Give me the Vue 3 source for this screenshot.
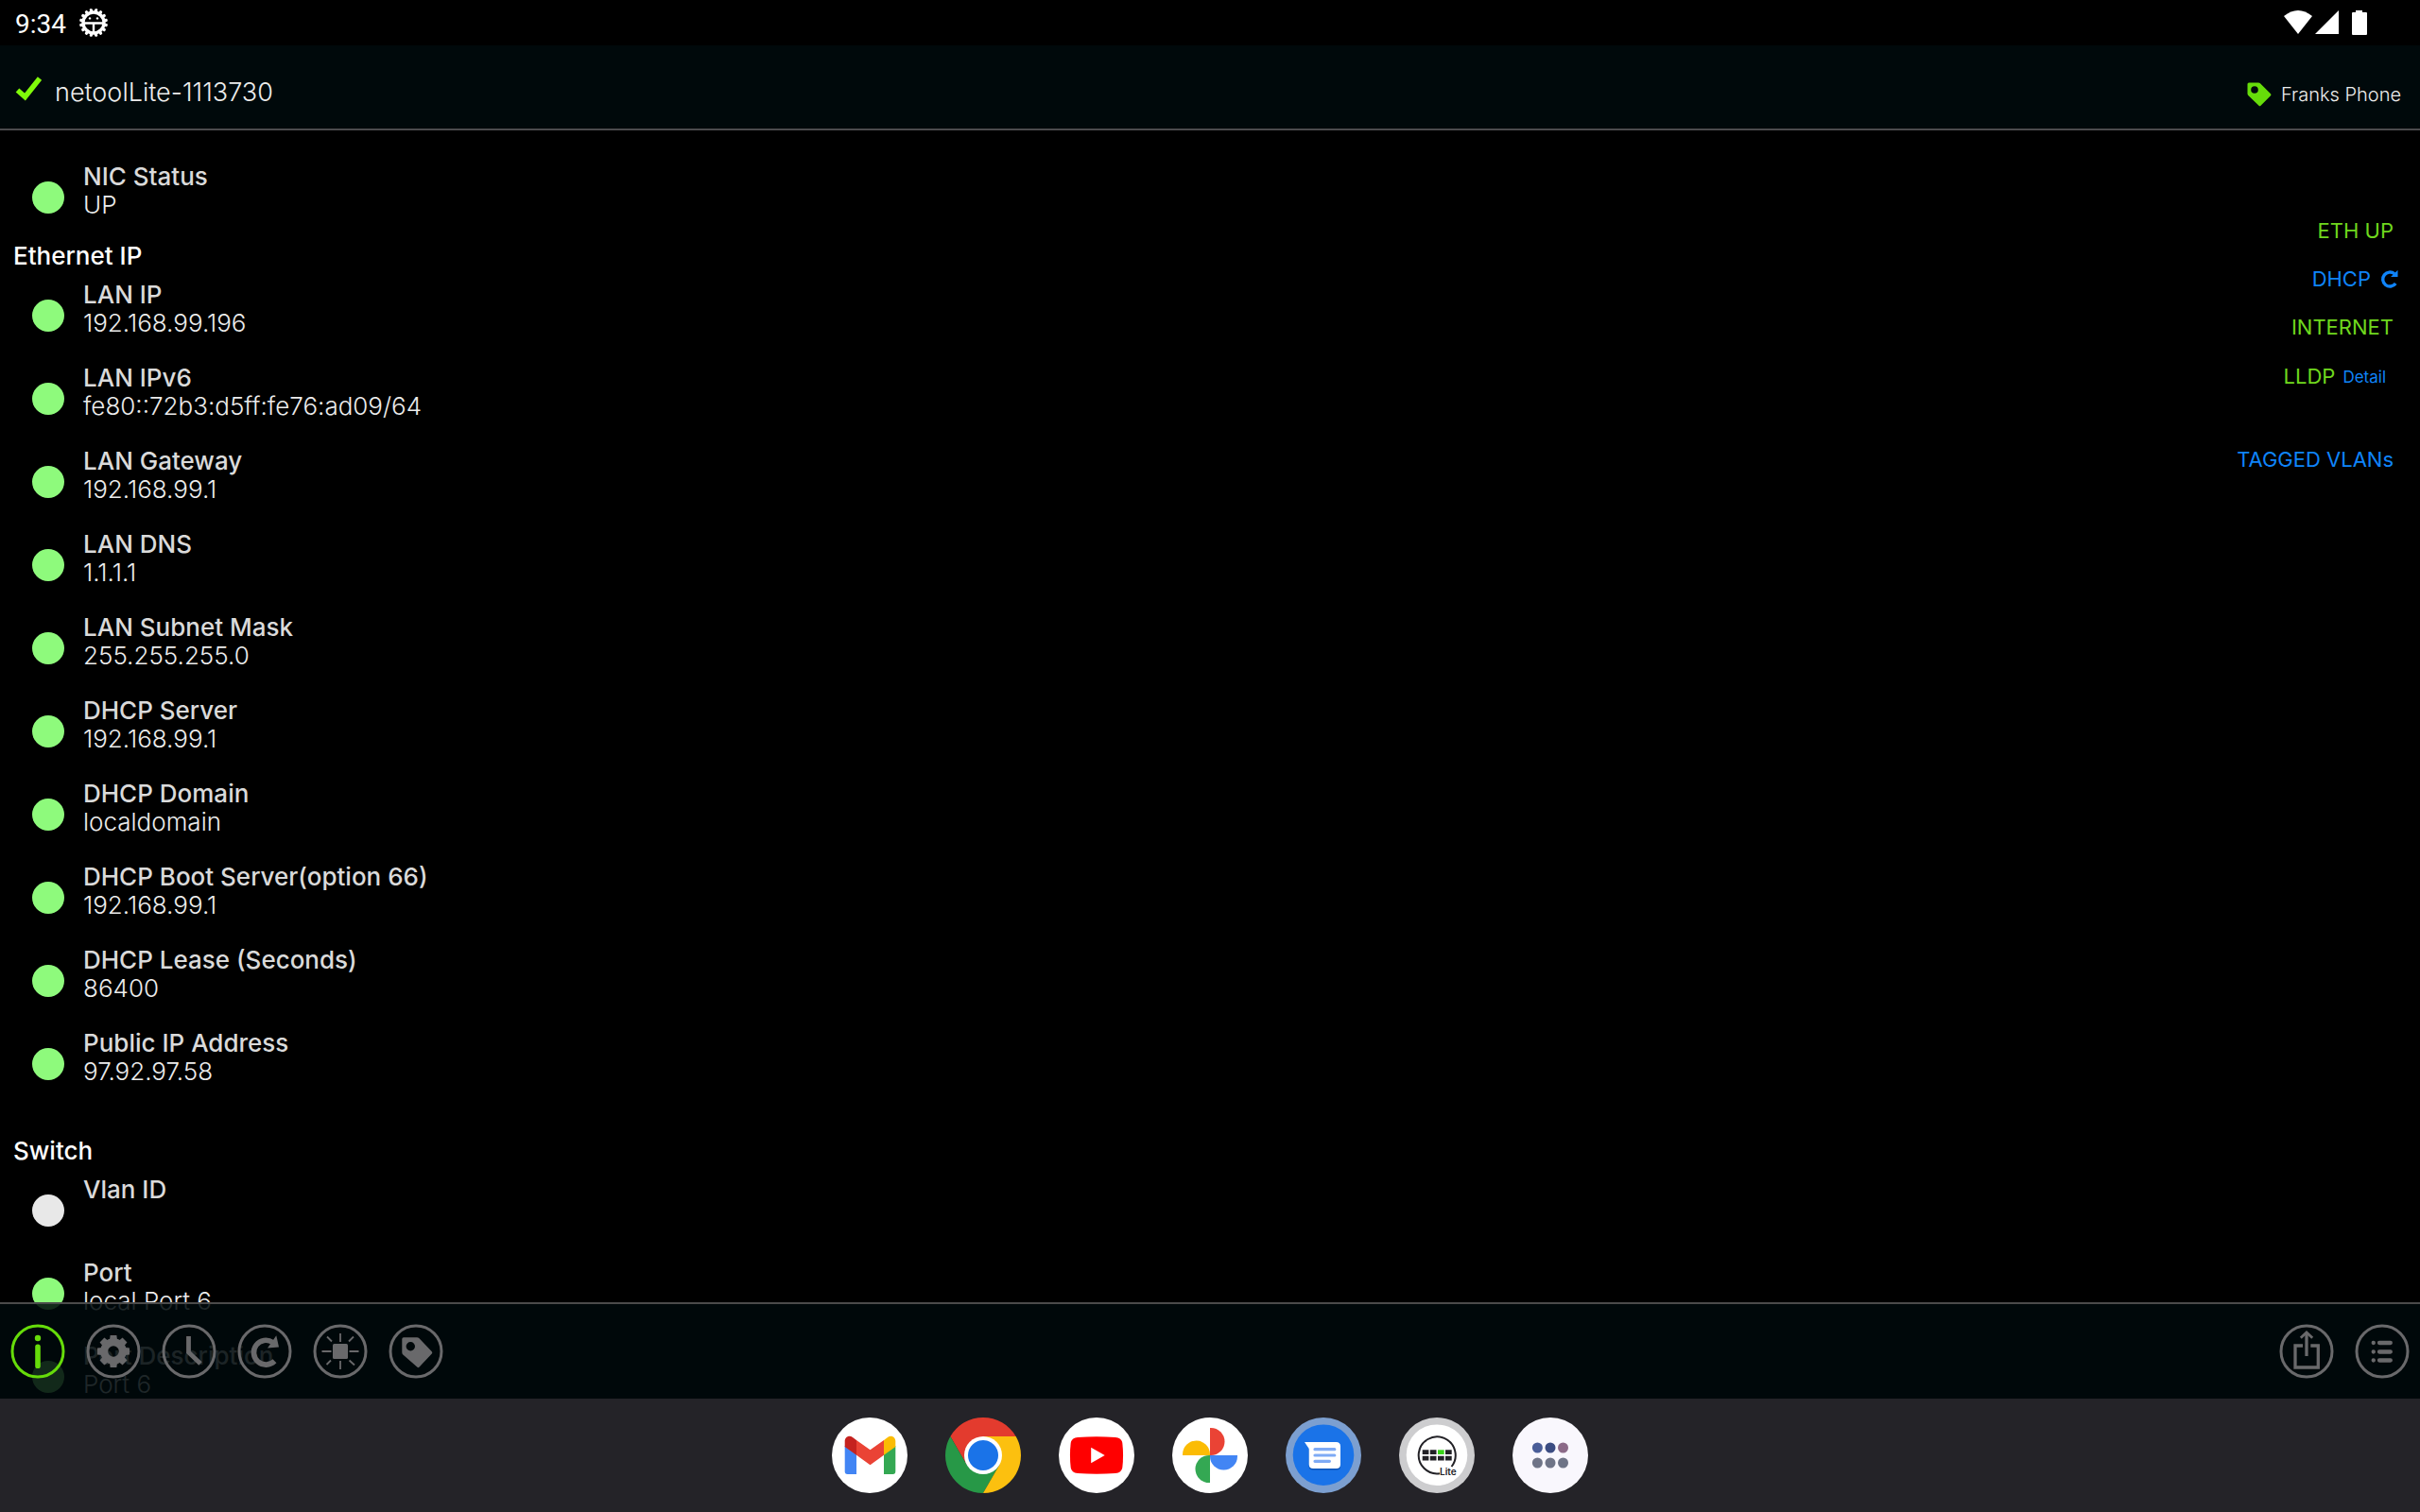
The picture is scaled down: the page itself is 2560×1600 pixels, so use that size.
<script setup>
import {ref} from 'vue'

let activeTab = ref('Info')

let groups = [
  {
    title: '',
    rows: [{label: 'NIC Status', value: 'UP', ok: true}]
  },
  {
    title: 'Ethernet IP',
    rows: [
      {label: 'LAN IP', value: '192.168.99.196', ok: true},
      {label: 'LAN IPv6', value: 'fe80::72b3:d5ff:fe76:ad09/64', ok: true},
      {label: 'LAN Gateway', value: '192.168.99.1', ok: true},
      {label: 'LAN DNS', value: '1.1.1.1', ok: true},
      {label: 'LAN Subnet Mask', value: '255.255.255.0', ok: true},
      {label: 'DHCP Server', value: '192.168.99.1', ok: true},
      {label: 'DHCP Domain', value: 'localdomain', ok: true},
      {label: 'DHCP Boot Server(option 66)', value: '192.168.99.1', ok: true},
      {label: 'DHCP Lease (Seconds)', value: '86400', ok: true},
      {label: 'Public IP Address', value: '97.92.97.58', ok: true}
    ]
  },
  {
    title: 'Switch',
    rows: [
      {label: 'Vlan ID', value: '', ok: false},
      {label: 'Port', value: 'local Port 6', ok: true},
      {label: 'Port Description', value: 'Port 6', ok: true}
    ]
  }
]

let tabs = ['Info', 'Settings', 'History', 'Refresh', 'Blink', 'Tag']
let apps = ['Gmail', 'Chrome', 'YouTube', 'Photos', 'Messages', 'netool Lite', 'All apps']
let teeth = [0, 45, 90, 135, 180, 225, 270, 315]
let bugTeeth = Array.from({length: 16}, (_, i) => i * 22.5 + 11.25)
</script>

<template>
  <div class="screen">
    <div class="status_bar">
      <span class="clock">9:34</span>
      <svg class="bug" viewBox="0 0 30 30">
        <g fill="#fff">
          <rect v-for="a in bugTeeth" :key="a" x="13.400" y="0" width="3.200" height="4" rx="1.200"
                :transform="`rotate(${a} 15 15)`"/>
        </g>
        <circle cx="15" cy="15" r="11" fill="none" stroke="#fff" stroke-width="3.400"/>
        <path d="M4 15.500H26M15 15.500V26" stroke="#fff" stroke-width="2.400"/>
        <circle cx="11" cy="10.400" r="1.200" fill="#fff"/>
        <circle cx="19" cy="10.400" r="1.200" fill="#fff"/>
      </svg>
      <svg class="signals" viewBox="0 0 90 28" fill="#fff">
        <path d="M0 7Q15-5 30 7L15 26Z"/>
        <path d="M33 26L58 1V26Z"/>
        <path d="M76 1H83V3H87Q88 3 88 4V26Q88 27 87 27H73Q72 27 72 26V4Q72 3 73 3H76Z"/>
      </svg>
    </div>

    <header class="title_bar">
      <svg class="check" viewBox="0 0 30 28">
        <path d="M2.500 15.500L10.500 22.500L26 3" fill="none" stroke="#80fa0a" stroke-width="5.500"/>
      </svg>
      <h1>netoolLite-1113730</h1>
      <svg class="phone_tag" viewBox="0 0 26 26">
        <path fill="#66dc0a" fill-rule="evenodd"
              d="M2 0.500H12Q13.200 0.500 14 1.300L25 12.200Q26 13.200 25 14.200L14.500 24.800Q13.500 25.800 12.500 24.800L1.300 14Q0.500 13.200 0.500 12V2Q0.500 0.500 2 0.500ZM8 4.200A3.800 3.800 0 1 0 8 11.800A3.800 3.800 0 1 0 8 4.200Z"/>
      </svg>
      <span class="phone">Franks Phone</span>
    </header>

    <main class="content">
      <div class="info_list">
        <section v-for="(group, g) in groups" :key="g" class="group">
          <h2 v-if="group.title">{{ group.title }}</h2>
          <div v-for="row in group.rows" :key="row.label" class="row">
            <span :class="row.ok ? 'dot' : 'dot off'"></span>
            <div class="texts">
              <div class="label">{{ row.label }}</div>
              <div class="value">{{ row.value }}</div>
            </div>
          </div>
        </section>
      </div>

      <aside class="side">
        <div class="side_line">ETH UP</div>
        <button class="side_line blue dhcp">DHCP
          <svg viewBox="0 1 20 20">
            <path d="M15 4.800A7.500 7.500 0 1 0 16.200 15" fill="none" stroke="currentColor" stroke-width="3.400"/>
            <path d="M18.500 0.800V8L11 8Z" fill="currentColor"/>
          </svg>
        </button>
        <div class="side_line">INTERNET</div>
        <div class="side_line lldp">LLDP
          <button class="blue detail">Detail</button>
        </div>
        <button class="side_line blue vlans">TAGGED VLANs</button>
      </aside>

      <nav class="toolbar">
        <button v-for="tab in tabs" :key="tab" :class="activeTab === tab ? 'tool active' : 'tool'"
                :aria-label="tab" @click="activeTab = tab">
          <svg viewBox="0 0 60 60">
            <circle cx="30" cy="30" r="27" fill="none" stroke="currentColor" stroke-width="3"/>
            <g v-if="tab === 'Info'" fill="currentColor">
              <circle cx="30" cy="16" r="3.200"/>
              <rect x="27.200" y="22.500" width="5.600" height="25.500" rx="2.600"/>
            </g>
            <g v-else-if="tab === 'Settings'">
              <circle cx="30" cy="30" r="9.800" fill="none" stroke="currentColor" stroke-width="8"/>
              <path v-for="a in teeth" :key="a" d="M26 18L26.600 13H33.400L34 18Z" fill="currentColor"
                    :transform="`rotate(${a} 30 30)`"/>
            </g>
            <path v-else-if="tab === 'History'" d="M29.500 14V31L42 43" fill="none" stroke="currentColor"
                  stroke-width="4.800"/>
            <g v-else-if="tab === 'Refresh'">
              <path d="M38.500 20.500A12.900 12.900 0 1 0 40.500 40.300" fill="none" stroke="currentColor" stroke-width="5.600"/>
              <path d="M42.300 13.300L45 25.500L33 26.500Z" fill="currentColor"/>
            </g>
            <g v-else-if="tab === 'Blink'">
              <rect x="22" y="22" width="16" height="16" rx="1.500" fill="currentColor"/>
              <path d="M30 11V20M30 40V49M10.500 30H20.500M39.500 30H49.500M16 14.500L21 19.500M39 19.500L44 14.500M15.500 44L20 39.500M39.500 39.500L45 44.500"
                    stroke="currentColor" stroke-width="1.800"/>
            </g>
            <path v-else fill="currentColor" fill-rule="evenodd"
                  d="M17 15.300H31Q32.500 15.300 33.500 16.300L46.800 30.200Q47.800 31.400 46.800 32.600L33.600 46.600Q32.400 47.800 31.200 46.600L16.300 33.500Q15.300 32.600 15.300 31V17Q15.300 15.300 17 15.300ZM24.300 20A4.700 4.700 0 1 0 24.300 29.400A4.700 4.700 0 1 0 24.300 20Z"/>
          </svg>
        </button>
        <div class="spacer"></div>
        <button class="tool" aria-label="Share">
          <svg viewBox="0 0 60 60" fill="none" stroke="currentColor" stroke-width="3">
            <circle cx="30" cy="30" r="27"/>
            <path d="M26 24H18V47H42.300V24H34.300M30 35V10.500" stroke-width="3.300"/>
            <path d="M23.800 15.800L30 10L36.200 15.800" stroke-width="2.800"/>
          </svg>
        </button>
        <button class="tool" aria-label="List">
          <svg viewBox="0 0 60 60" fill="none" stroke="currentColor" stroke-width="3">
            <circle cx="30" cy="30" r="27"/>
            <path d="M20.700 21H20.800M20.700 30.500H20.800M20.700 39.500H20.800M27 21H38.800M27 30.500H38.800M27 39.500H38.800"
                  stroke-width="4.300" stroke-linecap="round"/>
          </svg>
        </button>
      </nav>
    </main>

    <footer class="dock">
      <button v-for="app in apps" :key="app" :aria-label="app">
        <svg v-if="app === 'Gmail'" viewBox="0 0 80 80">
          <circle cx="40" cy="40" r="40" fill="#fff"/>
          <path d="M13.700 30L26 38V60H16.500Q13.700 60 13.700 57Z" fill="#4285f4"/>
          <path d="M67.300 30L55 38V60H64.500Q67.300 60 67.300 57Z" fill="#34a853"/>
          <path d="M26 24L40.500 34.300L55 24V39.700L40.500 50.300L26 39.700Z" fill="#ea4335"/>
          <path d="M26 24L22 21C18.500 18 13.700 20.500 13.700 25V31L26 39.700Z" fill="#c5221f"/>
          <path d="M55 24L59 21C62.500 18 67.300 20.500 67.300 25V31L55 39.700Z" fill="#fbbc04"/>
        </svg>
        <svg v-else-if="app === 'Chrome'" viewBox="0 0 80 80">
          <path d="M40 40V20H74.640A40 40 0 0 0 5.360 20L22.680 50Z" fill="#e33b2e"/>
          <path d="M40 40L22.680 50L5.360 20A40 40 0 0 0 40 80L57.320 50Z" fill="#279847"/>
          <path d="M40 40L57.320 50L40 80A40 40 0 0 0 74.640 20H40Z" fill="#fcc00f"/>
          <circle cx="40" cy="40" r="20" fill="#fff"/>
          <circle cx="40" cy="40" r="16" fill="#1a73e8"/>
        </svg>
        <svg v-else-if="app === 'YouTube'" viewBox="0 0 80 80">
          <circle cx="40" cy="40" r="40" fill="#fff"/>
          <path d="M20 21Q40 19.500 60 21Q66.500 21.500 67.300 27Q68.800 40 67.300 53Q66.500 58.500 60 59Q40 60.500 20 59Q13.500 58.500 12.700 53Q11.200 40 12.700 27Q13.500 21.500 20 21Z"
                fill="#f00"/>
          <path d="M34.200 31.700L48.700 40L34.200 48.300Z" fill="#fff"/>
        </svg>
        <svg v-else-if="app === 'Photos'" viewBox="0 0 80 80">
          <circle cx="40" cy="40" r="40" fill="#fff"/>
          <path d="M40 11H41A14.500 14.500 0 0 1 41 40H40Z" fill="#ea4335"/>
          <path d="M69 40V41A14.500 14.500 0 0 1 40 41V40Z" fill="#4285f4"/>
          <path d="M40 69H39A14.500 14.500 0 0 1 39 40H40Z" fill="#34a853"/>
          <path d="M11 40V39A14.500 14.500 0 0 1 40 39V40Z" fill="#fbbc04"/>
        </svg>
        <svg v-else-if="app === 'Messages'" viewBox="0 0 80 80">
          <circle cx="40" cy="40" r="40" fill="#7c9fd0"/>
          <circle cx="40" cy="39.700" r="32.300" fill="#1a73e8"/>
          <path d="M24.700 34V52Q24.700 55.500 29 55.500H54Q58 55.500 58 52Z" fill="#0d55b8"/>
          <path d="M20 26H53.500Q58 26 58 30.500V49.500Q58 54 53.500 54H29.200Q24.700 54 24.700 49.500V33Z" fill="#fff"/>
          <path d="M31 33.700H51.800M31 40H51.800M31 46.300H46.400" stroke="#7eaaf5" stroke-width="3.200" stroke-linecap="round"/>
        </svg>
        <svg v-else-if="app === 'netool Lite'" viewBox="0 0 80 80">
          <circle cx="40" cy="40" r="40" fill="#cdcdcf"/>
          <circle cx="40" cy="39.700" r="32.300" fill="#fff"/>
          <path d="M43 59.200A19.500 19.500 0 1 1 55.500 52" fill="none" stroke="#222126" stroke-width="2"/>
          <rect x="24" y="33.500" width="32.300" height="12.700" fill="#fff"/>
          <path d="M24.700 34.300H31.400V39H24.700ZM32.800 34.300H39.500V39H32.800ZM49 34.300H55.700V39H49ZM24.700 40.700H31.400V45.400H24.700ZM32.800 40.700H39.500V45.400H32.800ZM41 40.700H47.700V45.400H41ZM49 40.700H55.700V45.400H49Z"
                fill="#222126"/>
          <rect x="41" y="34.300" width="6.700" height="4.700" fill="#3ad51a"/>
          <text x="43" y="61" class="lite">Lite</text>
        </svg>
        <svg v-else viewBox="0 0 80 80">
          <circle cx="40" cy="40" r="40" fill="#f9f7fd"/>
          <circle cx="26.400" cy="32" r="5.500" fill="#4a5d98"/>
          <circle cx="40" cy="32" r="5.500" fill="#3b4c82"/>
          <circle cx="53.500" cy="32" r="5.500" fill="#8c6a88"/>
          <circle cx="26.400" cy="48" r="5.500" fill="#6f7487"/>
          <circle cx="40" cy="48" r="5.500" fill="#6f7487"/>
          <circle cx="53.500" cy="48" r="5.500" fill="#6f7487"/>
        </svg>
      </button>
    </footer>
  </div>
</template>

<style>
body {
  margin: 0;
  background: #000;
}
</style>

<style scoped>
.screen {
  display: flex;
  flex-direction: column;
  height: 100vh;
  overflow: hidden;
  background: #000;
  color: #ececec;
  font-family: Inter, sans-serif;
  font-size: 26px;
  line-height: 31px;
}

svg {
  display: block;
}

button {
  padding: 0;
  border: 0;
  background: none;
  font: inherit;
  color: inherit;
  cursor: pointer;
}

h1, h2 {
  margin: 0;
}

.status_bar {
  display: flex;
  align-items: center;
  height: 48px;
  padding: 0 54px 0 16px;
}

.clock {
  padding-top: 2px;
  font-family: Roboto, sans-serif;
  font-size: 28px;
  color: #fff;
}

.bug {
  width: 30px;
  height: 30px;
  margin-left: 14px;
}

.signals {
  width: 90px;
  height: 28px;
  margin-left: auto;
}

.title_bar {
  display: flex;
  align-items: center;
  height: 78px;
  padding: 10px 20px 0 16px;
  background: #00090b;
  border-bottom: 2px solid #4b4b4d;
}

.check {
  width: 30px;
  height: 28px;
  margin-bottom: 6px;
}

h1 {
  margin-left: 12px;
  font-size: 27px;
  font-weight: 300;
}

.phone_tag {
  width: 26px;
  height: 26px;
  margin-left: auto;
  margin-top: 6px;
}

.phone {
  margin: 6px 0 0 10px;
  font-size: 20px;
  font-weight: 300;
}

.content {
  position: relative;
  display: flex;
  flex: 1;
  min-height: 0;
  overflow: hidden;
}

.info_list {
  flex: 1;
  padding: 33px 14px 0;
}

.group {
  margin-bottom: 53px;
}

.group:first-child {
  margin-bottom: 23px;
}

h2 {
  margin-bottom: 10px;
  color: #fff;
  font-size: 26px;
  font-weight: 500;
}

.row {
  display: flex;
  padding-left: 20px;
}

.row + .row {
  margin-top: 27px;
}

.dot {
  width: 34px;
  height: 34px;
  margin: 21px 20px 0 0;
  border-radius: 50%;
  background: #8efa7c;
}

.off {
  background: #e8e8e8;
}

.label {
  font-weight: 500;
  color: #dadada;
}

.value {
  min-height: 30px;
  line-height: 30px;
  font-weight: 300;
}

.side {
  display: flex;
  flex-direction: column;
  align-items: flex-end;
  padding: 81px 28px 0 0;
  color: #6fd81e;
  font-size: 22px;
}

.side_line {
  display: flex;
  align-items: center;
  line-height: 51px;
}

.blue {
  color: #0f84fa;
}

.dhcp {
  gap: 10px;
  margin-right: -6px;
}

.dhcp svg {
  width: 20px;
  height: 20px;
}

.lldp {
  gap: 8px;
  margin-right: 8px;
}

.detail {
  padding-top: 2px;
  font-size: 17px;
}

.vlans {
  margin-top: 36px;
}

.toolbar {
  position: absolute;
  left: 0;
  right: 0;
  bottom: 0;
  display: flex;
  align-items: center;
  height: 100px;
  background: rgba(0, 9, 11, 0.87);
  border-top: 2px solid #4b4b4b;
}

.tool {
  display: flex;
  justify-content: center;
  width: 80px;
  color: #69696b;
}

.tool svg {
  width: 60px;
  height: 60px;
}

.active {
  color: #66dc0a;
}

.spacer {
  flex: 1;
}

.dock {
  display: flex;
  justify-content: center;
  align-items: center;
  gap: 40px;
  height: 120px;
  background: #242328;
}

.dock svg {
  width: 80px;
  height: 80px;
}

.lite {
  font-family: Inter, sans-serif;
  font-size: 10px;
  font-weight: 600;
  fill: #222126;
}
</style>
